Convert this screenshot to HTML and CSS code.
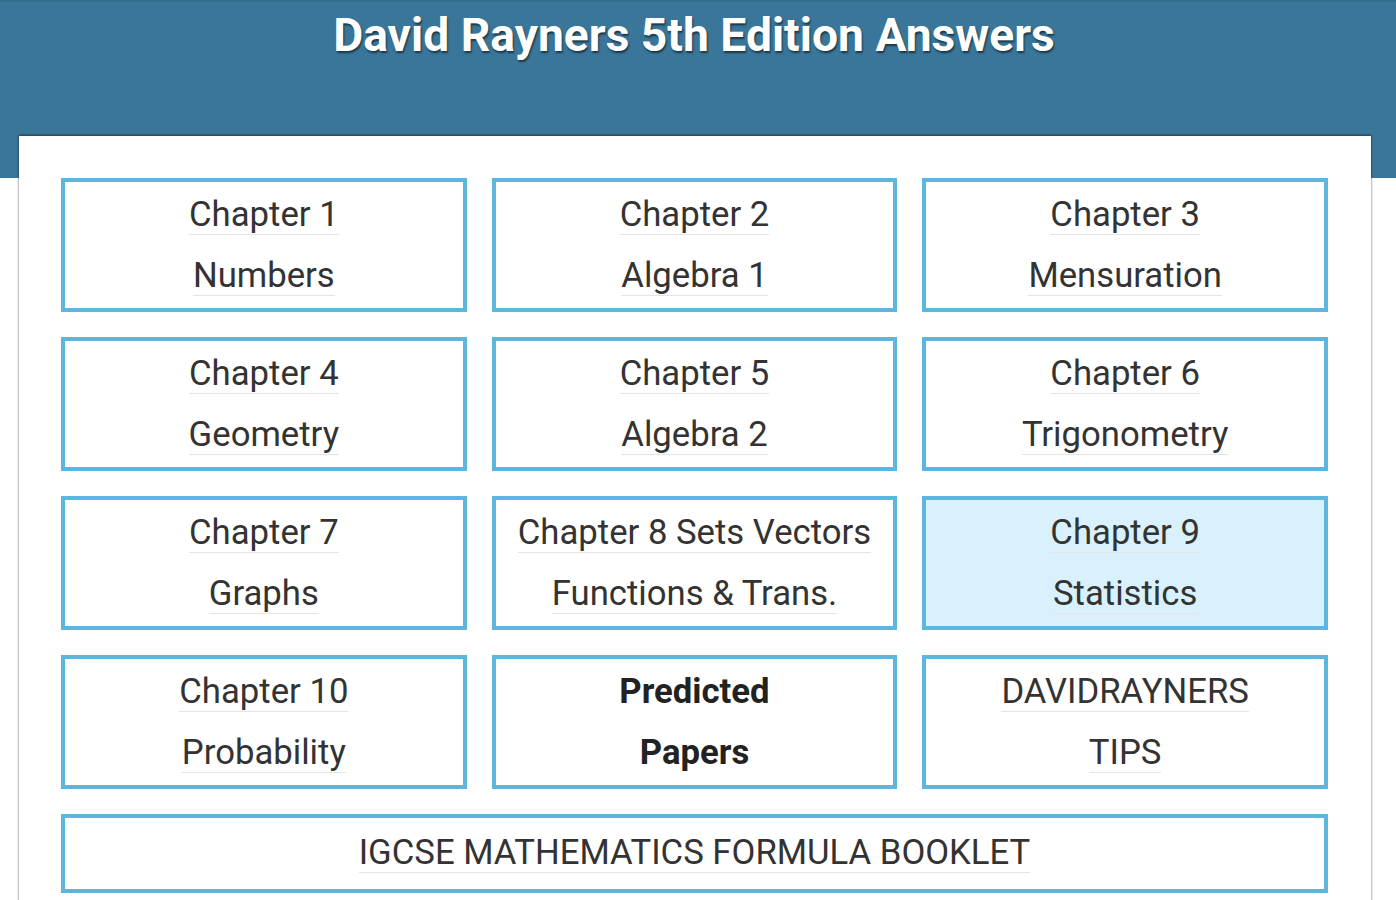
FILE: index.html
```html
<!DOCTYPE html>
<html lang="en">
<head>
<meta charset="utf-8">
<title>David Rayners 5th Edition Answers</title>
<link rel="stylesheet" href="styles.css">
</head>
<body>
<header class="banner">
  <h1 class="banner-title">David Rayners 5th Edition Answers</h1>
</header>
<main class="card">
  <nav class="grid">
    <a class="tile" href="#"><span class="ln">Chapter 1</span><br><span class="ln">Numbers</span></a>
    <a class="tile" href="#"><span class="ln">Chapter 2</span><br><span class="ln">Algebra 1</span></a>
    <a class="tile" href="#"><span class="ln">Chapter 3</span><br><span class="ln">Mensuration</span></a>
    <a class="tile" href="#"><span class="ln">Chapter 4</span><br><span class="ln">Geometry</span></a>
    <a class="tile" href="#"><span class="ln">Chapter 5</span><br><span class="ln">Algebra 2</span></a>
    <a class="tile" href="#"><span class="ln">Chapter 6</span><br><span class="ln">Trigonometry</span></a>
    <a class="tile" href="#"><span class="ln">Chapter 7</span><br><span class="ln">Graphs</span></a>
    <a class="tile" href="#"><span class="ln">Chapter 8 Sets Vectors</span><br><span class="ln">Functions &amp; Trans.</span></a>
    <a class="tile tile-active" href="#"><span class="ln">Chapter 9</span><br><span class="ln">Statistics</span></a>
    <a class="tile" href="#"><span class="ln">Chapter 10</span><br><span class="ln">Probability</span></a>
    <a class="tile tile-bold" href="#"><span>Predicted</span><br><span>Papers</span></a>
    <a class="tile" href="#"><span class="ln">DAVIDRAYNERS</span><br><span class="ln">TIPS</span></a>
    <a class="tile tile-wide" href="#"><span class="ln">IGCSE MATHEMATICS FORMULA BOOKLET</span></a>
  </nav>
</main>
</body>
</html>
```

FILE: styles.css
```css
html, body {
  margin: 0;
  padding: 0;
  background: #ffffff;
}

body {
  font-family: Roboto, "Liberation Sans", sans-serif;
}

.banner {
  background: #3a7699;
  border-top: 2px solid #346c8c;
  box-sizing: border-box;
  height: 178px;
  padding: 6px 8px 0 0;
}

.banner-title {
  margin: 0;
  text-align: center;
  color: #ffffff;
  font-weight: 700;
  font-size: 46.2px;
  line-height: 54px;
  text-shadow: 1px 2px 2px rgba(0, 0, 0, 0.55);
}

.card {
  margin: -42px 0 0 19px;
  width: 1352px;
  box-sizing: border-box;
  background: #ffffff;
  padding: 42px 43px 20px 42px;
  box-shadow: 0 -1px 2px rgba(0, 0, 0, 0.35), 0 0 2px 1px rgba(0, 0, 0, 0.18);
  position: relative;
}

.grid {
  display: grid;
  grid-template-columns: repeat(3, 1fr);
  column-gap: 25px;
  row-gap: 25px;
}

.tile {
  display: block;
  box-sizing: border-box;
  height: 134px;
  border: 4px solid #5db6e0;
  padding-top: 2px;
  text-align: center;
  text-decoration: none;
  color: #333333;
  font-size: 34.7px;
  line-height: 61px;
  white-space: nowrap;
}

.ln {
  border-bottom: 1px solid #e4e4e4;
}

.tile-active {
  background: #d8f1fc;
}

.tile-bold {
  font-weight: 700;
  color: #222222;
}

.tile-wide {
  grid-column: 1 / -1;
  height: 79px;
  padding-top: 4px;
}
```
